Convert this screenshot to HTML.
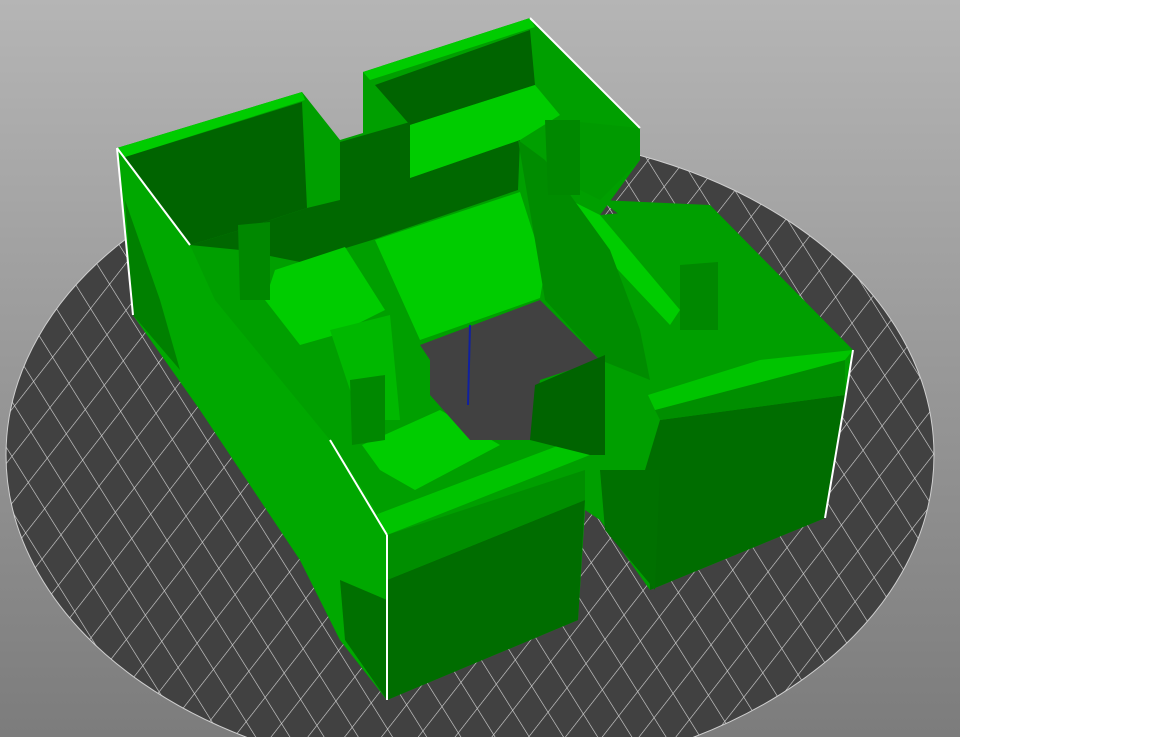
<!DOCTYPE html>
<html><head><meta charset="utf-8"><style>
html,body{margin:0;padding:0;width:1152px;height:737px;overflow:hidden;background:#fff}
#v{position:absolute;left:0;top:0;width:960px;height:737px;overflow:hidden;background:linear-gradient(#b5b5b5,#7c7c7c)}
svg{display:block}
</style></head><body>
<div id="v">
<svg width="960" height="737" viewBox="0 0 960 737">
<defs>
<pattern id="g1" width="29" height="29" patternUnits="userSpaceOnUse" patternTransform="rotate(38)">
<line x1="0" y1="0" x2="0" y2="29" stroke="#d8d8d8" stroke-width="1.2"/>
</pattern>
<pattern id="g2" width="29" height="29" patternUnits="userSpaceOnUse" patternTransform="rotate(-32)">
<line x1="0" y1="0" x2="0" y2="29" stroke="#d8d8d8" stroke-width="1.2"/>
</pattern>
<clipPath id="ec"><ellipse cx="470" cy="455" rx="464" ry="322"/></clipPath>
</defs>
<ellipse cx="470" cy="455" rx="464" ry="322" fill="#414141" stroke="#cfcfcf" stroke-width="1"/>
<g clip-path="url(#ec)">
<rect x="0" y="120" width="960" height="660" fill="url(#g1)"/>
<rect x="0" y="120" width="960" height="660" fill="url(#g2)"/>
</g>
<polygon fill="#009f00" points="117,148 302,92 340,140 363,133 363,72 530,18 640,128 640,160 600,215 710,205 853,350 845,400 825,518 650,590 600,520 585,510 578,620 387,700 340,640 300,560 200,410 133,315"/>
<polygon fill="#006400" points="125,157 302,102 307,208 240,230 190,245"/>
<polygon fill="#006400" points="375,85 530,30 535,85 410,125"/>
<polygon fill="#006800" points="340,142 410,122 410,178 520,140 518,190 372,240 300,262 240,250 190,245 240,230 307,208 340,200"/>
<polygon fill="#00cc00" points="410,125 535,85 560,115 520,140 410,178"/>
<polygon fill="#00cc00" points="375,240 520,192 545,270 540,298 420,340"/>
<polygon fill="#00cc00" points="265,300 275,270 345,247 385,310 335,335 300,345"/>
<polygon fill="#00cc00" points="362,445 440,410 500,445 415,490 380,470"/>
<polygon fill="#00cc00" points="117,148 302,92 305,100 125,157"/>
<polygon fill="#00cc00" points="363,72 530,18 535,27 370,80"/>
<polygon fill="#00cc00" points="560,195 600,215 680,310 670,325 590,240"/>
<polygon fill="#414141" points="420,345 540,300 600,360 540,380 530,440 470,440 430,395 430,360"/>
<polygon fill="#008c00" points="518,140 545,160 610,250 640,330 650,380 600,360 545,300 540,270"/>
<polygon fill="#009a00" points="560,120 640,128 640,160 600,200 560,180"/>
<polygon fill="#009f00" points="600,200 710,205 720,240 640,230"/>
<polygon fill="#00b800" points="330,330 390,315 400,420 360,420"/>
<polygon fill="#006d00" points="660,420 845,395 825,518 650,590 645,470"/>
<polygon fill="#008e00" points="655,410 845,360 845,395 660,420"/>
<polygon fill="#00c400" points="648,395 760,360 853,350 845,360 655,410"/>
<polygon fill="#006d00" points="387,580 585,500 578,620 387,700"/>
<polygon fill="#008e00" points="387,535 585,470 585,500 387,580"/>
<polygon fill="#00c400" points="375,515 560,445 590,455 387,535"/>
<polygon fill="#006400" points="535,385 605,355 605,455 590,455 530,440"/>
<polygon fill="#00a800" points="117,148 190,245 215,300 330,440 370,500 387,535 387,700 340,640 300,560 200,410 133,315"/>
<polygon fill="#008000" points="125,200 133,315 180,370 160,300"/>
<polygon fill="#007000" points="340,580 387,600 387,700 345,640"/>
<polygon fill="#007000" points="600,470 660,470 655,590 605,530"/>
<polygon fill="#008800" points="350,380 385,375 385,440 352,445"/>
<polygon fill="#008800" points="545,120 580,120 580,195 548,195"/>
<polygon fill="#008800" points="680,265 718,262 718,330 680,330"/>
<polygon fill="#008800" points="238,225 270,222 270,300 240,300"/>
<polyline fill="none" stroke="#fff" stroke-width="2" points="133,315 117,148"/>
<polyline fill="none" stroke="#fff" stroke-width="2" points="117,148 190,245"/>
<polyline fill="none" stroke="#fff" stroke-width="2" points="387,535 387,700"/>
<polyline fill="none" stroke="#fff" stroke-width="2" points="330,440 387,535"/>
<polyline fill="none" stroke="#fff" stroke-width="2" points="530,18 640,128"/>
<polyline fill="none" stroke="#fff" stroke-width="2" points="853,350 845,400 825,518"/>
<line x1="468" y1="405" x2="470" y2="325" stroke="#1020a0" stroke-width="2"/>
</svg>
</div>
</body></html>
